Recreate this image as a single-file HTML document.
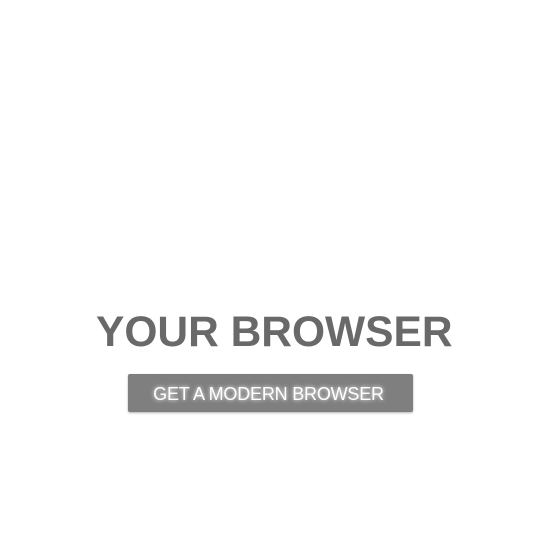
<!DOCTYPE html>
<html><head><style>
html,body{margin:0;padding:0;background:#fff;width:540px;height:540px;overflow:hidden}
.t{position:absolute;left:96px;top:309px;font:bold 42.5px "Liberation Sans",sans-serif;color:#696969;white-space:nowrap}
.b{position:absolute;left:128px;top:374px;width:285px;height:38px;background:#7f7f7f;border-radius:2px;box-shadow:0 1px 2px rgba(0,0,0,.3)}
.b span{position:absolute;left:0;right:4px;top:10px;text-align:center;font:18px "Liberation Sans",sans-serif;color:#fff;text-shadow:0 0 4px #fff;letter-spacing:-0.2px}
</style></head><body>
<div class="t">YOUR BROWSER</div>
<div class="b"><span>GET A MODERN BROWSER</span></div>
</body></html>
